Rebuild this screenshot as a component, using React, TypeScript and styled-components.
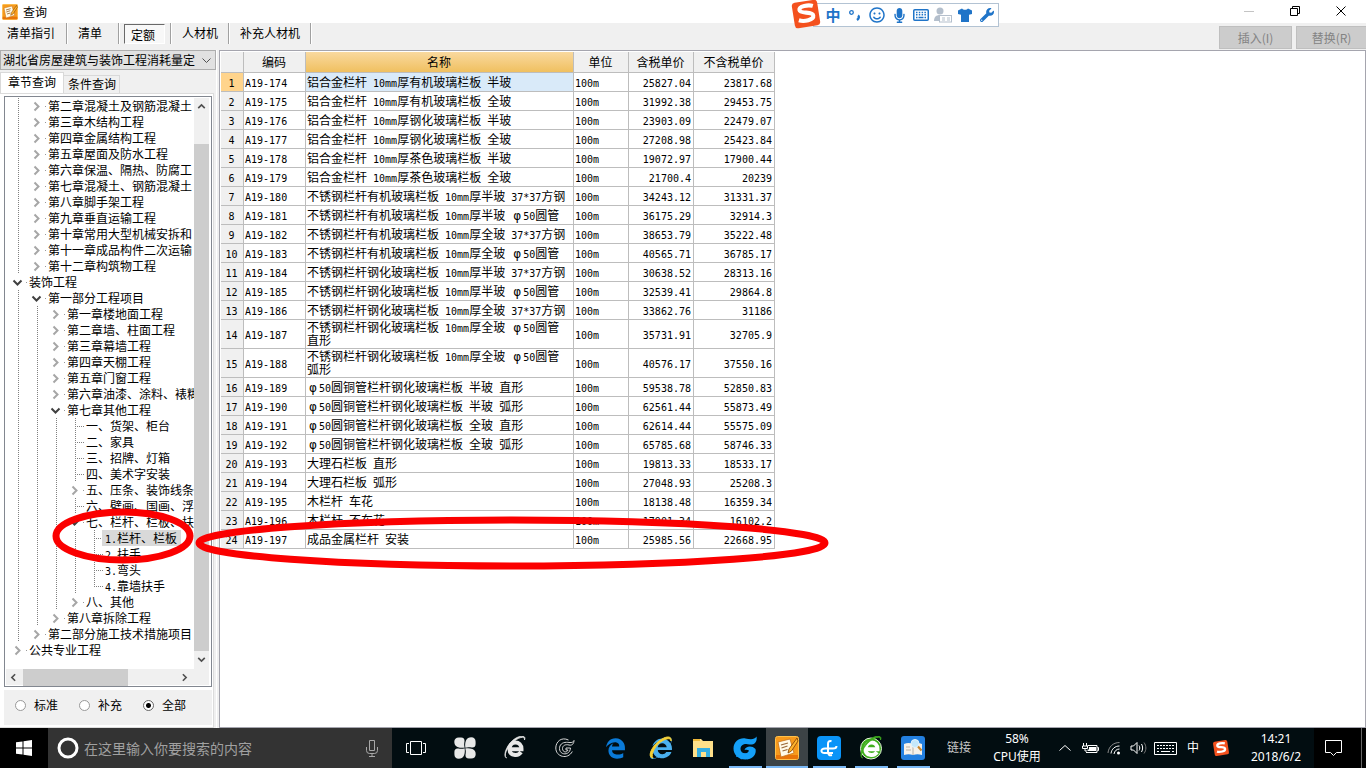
import React, { useState } from "react";
import styled, { createGlobalStyle, css } from "styled-components";
import {
  FaEdgeLegacy,
  FaInternetExplorer,
  FaMicrophone,
  FaRegSmile,
  FaWrench,
} from "react-icons/fa";

const uiFont = `"Noto Sans CJK SC", sans-serif`;
const monoFont = `"DejaVu Sans Mono", "Noto Sans CJK SC", monospace`;

const GlobalStyle = createGlobalStyle`
  *, *::before, *::after { box-sizing: border-box; }
  body { margin: 0; background: #f0f0f0; color: #000; font: 12px/16px ${uiFont}; }
  button, input, select { font: inherit; color: inherit; margin: 0; }
  svg { display: block; flex: none; }
`;

/* ---------- mixed half-width / full-width text ---------- */

const Half = styled.span`
  font-family: ${monoFont};
  font-size: 10px;
  line-height: 8px;
  white-space: pre-wrap;
`;

const Wide = styled.span`
  display: inline-block;
  width: 12px;
  line-height: 8px;
  text-align: center;
  font-family: "DejaVu Sans", sans-serif;
`;

function Mixed({ text }: { text: string }) {
  return (
    <>
      {text.split(/([\x20-\x7e]+|φ)/).map((part, i) => {
        if (part === "φ") return <Wide key={i}>φ</Wide>;
        return i % 2 ? <Half key={i}>{part}</Half> : part;
      })}
    </>
  );
}

/* ---------- window frame ---------- */

const Screen = styled.div`
  position: relative;
  display: flex;
  flex-direction: column;
  min-height: 100vh;
`;

const TitleBar = styled.header`
  display: flex;
  align-items: center;
  height: 23px;
  padding-left: 2px;
  gap: 5px;
  background: #fff;
`;

const WindowTitle = styled.h1`
  margin: 0;
  font-size: 12px;
  font-weight: 400;
`;

const WindowButtons = styled.div`
  display: flex;
  margin-left: auto;
  padding-right: 2px;
`;

const WindowButton = styled.button`
  display: grid;
  place-items: center;
  width: 46px;
  height: 22px;
  padding: 0;
  border: 0;
  background: none;
`;

const Toolbar = styled.nav`
  display: flex;
  align-items: flex-start;
  height: 27px;
`;

const ToolSlot = styled.div`
  display: flex;
  align-items: center;
  height: 21px;
  border-right: 1px solid #a0a0a0;
  box-shadow: 1px 0 #fff;
  &:nth-child(2) { padding-right: 6px; }
`;

const ToolButton = styled.button<{ $pressed?: boolean }>`
  height: 20px;
  padding: 0 10px 2px 11px;
  border: 0;
  background: none;
  line-height: 18px;
  ${ToolSlot}:first-child & { padding: 0 11px 2px 7px; }
  ${(p) =>
    p.$pressed &&
    css`
      margin: 1px 5px 0;
      padding: 1px 9px 0 6px;
      line-height: 16px;
      background: #f8f8f8;
      border: 1px solid #fff;
      border-top-color: #696969;
      border-left-color: #696969;
    `}
`;

const ToolActions = styled.div`
  display: flex;
  gap: 4px;
  margin-left: auto;
  padding-top: 3px;
`;

const ActionButton = styled.button`
  height: 23px;
  width: 73px;
  padding: 0;
  border: 1px solid #bfbfbf;
  background: #ccc;
  color: #838383;
  &:last-child {
    width: 70px;
    border-right: 0;
  }
`;

const Workspace = styled.main`
  display: flex;
  flex: 1;
  gap: 2px;
`;

/* ---------- left column ---------- */

const SidePanel = styled.aside`
  display: flex;
  flex-direction: column;
  width: 217px;
  flex: none;
  border-right: 1px solid #fff;
`;

const LibraryBox = styled.div`
  position: relative;
  svg {
    position: absolute;
    right: 5px;
    top: 8px;
    pointer-events: none;
  }
`;

const LibrarySelect = styled.select`
  appearance: none;
  display: block;
  width: 100%;
  height: 20px;
  padding: 0 20px 0 2px;
  border: 1px solid #adadad;
  border-radius: 0;
  background: #e1e1e1;
`;

const Tabs = styled.div`
  display: flex;
  align-items: flex-end;
  height: 23px;
  padding-top: 2px;
`;

const Tab = styled.button<{ $active?: boolean }>`
  height: 18px;
  padding: 0 3px 2px 4px;
  border: 1px solid #d9d9d9;
  border-bottom: 0;
  border-left: 0;
  background: #f0f0f0;
  line-height: 15px;
  ${(p) =>
    p.$active &&
    css`
      height: 21px;
      padding: 0 7px 3px 7px;
      border-left: 1px solid #d9d9d9;
      background: #fff;
    `}
`;

const TabPage = styled.section`
  display: flex;
  flex-direction: column;
  flex: 1;
  margin-right: 2px;
  padding: 2px 1px 2px 4px;
  border: 1px solid #dcdcdc;
  border-left: 0;
  background: #fff;
`;

const TreeBox = styled.div`
  display: grid;
  grid-template-columns: 1fr 15px;
  grid-template-rows: 1fr 16px;
  flex: 1;
  padding: 1px 2px 1px 1px;
  border: 1px solid #828790;
`;

const TreeList = styled.ul`
  min-width: 0;
  margin: 0;
  padding: 0 0 0 3px;
  overflow: hidden;
  list-style: none;
`;

const TreeRow = styled.li`
  display: flex;
  height: 16px;
  line-height: 16px;
  white-space: nowrap;
`;

const Guide = styled.span<{ $kind: "line" | "leaf" | "last" }>`
  width: 19px;
  height: 16px;
  flex: none;
  background-repeat: no-repeat;
  background-image: ${(p) =>
    p.$kind === "line"
      ? "repeating-linear-gradient(#808080 0 1px, transparent 1px 2px)"
      : "repeating-linear-gradient(#808080 0 1px, transparent 1px 2px), repeating-linear-gradient(90deg, #808080 0 1px, transparent 1px 2px)"};
  background-size: 1px ${(p) => (p.$kind === "last" ? "9px" : "16px")}, 9px 1px;
  background-position: 9px 0, 9px 8px;
`;

const Toggle = styled.span`
  display: flex;
  align-items: center;
  width: 19px;
  height: 16px;
  padding-left: 3px;
  flex: none;
  background: linear-gradient(#999, #999) 17px 8px / 1px 1px no-repeat;
`;

const NodeLabel = styled.span<{ $selected?: boolean }>`
  height: 16px;
  padding: 0 4px 0 1px;
  ${(p) =>
    p.$selected &&
    css`
      margin-left: -2px;
      padding-left: 3px;
      background: #d9d9d9;
    `}
`;

const ScrollV = styled.div`
  display: grid;
  grid-template-rows: 46px 1fr 18px;
  justify-items: center;
  background: #f0f0f0;
`;

const ScrollH = styled.div`
  display: grid;
  grid-column: 1 / 3;
  grid-template-columns: 17px 105px 1fr 32px;
  align-items: center;
  background: #f0f0f0;
`;

const Thumb = styled.span`
  align-self: stretch;
  justify-self: stretch;
  background: #cdcdcd;
`;

const ScrollButton = styled.button`
  display: grid;
  place-items: center;
  width: 15px;
  height: 17px;
  padding: 0;
  border: 0;
  background: none;
`;

const ScopeBar = styled.div`
  display: flex;
  align-items: center;
  height: 35px;
  margin-top: 3px;
  padding: 0 0 5px 11px;
  background: #f0f0f0;
`;

const ScopeOption = styled.label`
  display: flex;
  align-items: center;
  gap: 8px;
  width: 64px;
  white-space: nowrap;
`;

const Radio = styled.input`
  appearance: none;
  width: 11px;
  height: 11px;
  border: 1px solid #999;
  border-radius: 50%;
  background: #fff;
  &:checked {
    border-color: #666;
    background: radial-gradient(circle, #000 0 2px, #fff 3px);
  }
`;

/* ---------- price table ---------- */

const Sheet = styled.section`
  flex: 1;
  min-width: 0;
  padding: 1px;
  border: 1px solid #a5a5ae;
  background: #fff;
`;

const PriceTable = styled.table`
  width: 554px;
  border-collapse: separate;
  border-spacing: 0;
  table-layout: fixed;
  line-height: 13px;
  tr { height: 19px; }
  thead tr { height: 21px; }
`;

const HeadCell = styled.th<{ $active?: boolean }>`
  padding: 0 1px 2px 0;
  border-right: 1px solid #bdbdbd;
  border-bottom: 1px solid #bdbdbd;
  background: ${(p) => (p.$active ? "linear-gradient(#f9d99f, #f0c060)" : "#f0f0f0")};
  font-weight: 400;
  text-align: center;
`;

const RowHead = styled(HeadCell)`
  background: ${(p) => (p.$active ? "#ffd48c" : "#f0f0f0")};
`;

const Cell = styled.td<{ $number?: boolean; $active?: boolean }>`
  padding: 0 ${(p) => (p.$number ? "2px" : "1px")} 2px 1px;
  border-right: 1px solid #bdbdbd;
  border-bottom: 1px solid #bdbdbd;
  background: ${(p) => (p.$active ? "#d9eaf9" : "#fff")};
  text-align: ${(p) => (p.$number ? "right" : "left")};
`;

/* ---------- input method bar, pen marks ---------- */

const InputBar = styled.div`
  position: absolute;
  top: 3px;
  right: 367px;
  display: flex;
  align-items: center;
  height: 24px;
  padding: 0 0 0 8px;
  border: 1px solid #b3c3d3;
  background: #fff;
  color: #1f74c8;
`;

const InputLogo = styled.span`
  position: absolute;
  left: -24px;
  top: -6px;
`;

const InputTool = styled.button`
  display: grid;
  place-items: center;
  width: 22px;
  height: 22px;
  padding: 0;
  border: 0;
  background: none;
  font-size: 15px;
  font-weight: 700;
`;

const PenMarks = styled.svg`
  position: absolute;
  left: 0;
  top: 0;
  width: 840px;
  height: 600px;
  pointer-events: none;
`;

/* ---------- taskbar ---------- */

const Taskbar = styled.footer`
  display: flex;
  height: 40px;
  background: #020d11;
  color: #fff;
`;

const TaskButton = styled.button<{ $width: number; $mark?: boolean; $active?: boolean }>`
  display: grid;
  place-items: center;
  width: ${(p) => p.$width}px;
  flex: none;
  padding: 0;
  border: 0;
  background: ${(p) => (p.$active ? "#3c4346" : "none")};
  ${(p) =>
    p.$mark &&
    css`
      background-image: linear-gradient(#7ab8f5, #7ab8f5);
      background-size: ${p.$active ? "42px" : "33px"} 2px;
      background-repeat: no-repeat;
      background-position: center bottom;
    `}
`;

const StartButton = styled(TaskButton)`
  background: #000;
`;

const SearchBox = styled.label`
  display: flex;
  align-items: center;
  flex: 0 0 344px;
  padding: 0 14px 0 8px;
  gap: 4px;
  background: #333;
`;

const SearchInput = styled.input`
  flex: 1;
  min-width: 0;
  padding: 0;
  border: 0;
  outline: 0;
  background: none;
  font-size: 14px;
  &::placeholder { color: #a0a0a0; opacity: 1; }
`;

const Tray = styled.div`
  display: flex;
  align-items: center;
  margin-left: auto;
`;

const TrayText = styled.div<{ $width: number; $dim?: boolean }>`
  width: ${(p) => p.$width}px;
  color: ${(p) => (p.$dim ? "#c8c8c8" : "#fff")};
  font-family: "Noto Sans", ${uiFont};
  line-height: 18px;
  text-align: center;
  white-space: nowrap;
`;

const TrayIcon = styled.button<{ $width: number }>`
  display: grid;
  place-items: center;
  width: ${(p) => p.$width}px;
  height: 40px;
  padding: 0;
  border: 0;
  background: none;
`;

const NoticeArea = styled.div`
  display: flex;
  align-items: center;
  justify-content: center;
  width: 52px;
  height: 40px;
  padding-right: 14px;
  background: linear-gradient(#666, #666) 47px 0 / 1px 40px no-repeat #000;
`;

/* ---------- drawings ---------- */

function Chevron({ dir, color, size = 11 }: { dir: "right" | "down" | "up" | "left"; color: string; size?: number }) {
  const paths = {
    right: "M3.5 1.5 7.5 5.5 3.5 9.5",
    left: "M7.5 1.5 3.5 5.5 7.5 9.5",
    down: "M1.5 3.5 5.5 7.5 9.5 3.5",
    up: "M1.5 7.5 5.5 3.5 9.5 7.5",
  };
  return (
    <svg width={size} height={size} viewBox="0 0 11 11" fill="none" stroke={color} strokeWidth="2">
      <path d={paths[dir]} />
    </svg>
  );
}

function NoteLogo({ size }: { size: number }) {
  return (
    <svg width={size} height={size} viewBox="0 0 24 24">
      <rect x="0.5" y="0.5" width="23" height="23" rx="2" fill="#f79a1c" stroke="#ffc14a" />
      <path d="M1 19h22v3a1 1 0 0 1-1 1H2a1 1 0 0 1-1-1z" fill="#e87408" />
      <path d="M3 6 15 3l4 14-13 4z" fill="#fffbe8" stroke="#c8741a" strokeWidth="0.8" />
      <path d="m6 9 7-2M6.500 12l6-2M7.500 15l5-1.500" stroke="#9a6a3a" strokeWidth="1.300" />
      <path d="M22 2 14 13l-1 4 3.500-2L23 5z" fill="#ffb52e" stroke="#8a4a08" strokeWidth="0.900" />
    </svg>
  );
}

function SogouLogo({ size }: { size: number }) {
  return (
    <svg width={size} height={size} viewBox="0 0 30 30">
      <g transform="rotate(-9 15 15)">
        <rect x="3" y="3" width="24" height="24" rx="3" fill="#f4511e" />
        <path
          d="M22.500 8.500c-4-1.800-13-2-13 1.800 0 4.200 12 2.700 12 7.200 0 4.300-9.500 4.500-14 2.300"
          fill="none"
          stroke="#fff"
          strokeWidth="3.800"
        />
      </g>
    </svg>
  );
}

const PersonCard = () => (
  <svg width="18" height="16" viewBox="0 0 18 16" fill="#b4bfcc">
    <circle cx="6" cy="4" r="3.500" />
    <path d="M0 14c0-4 2-6 6-6 1 0 2 0 3 .5V14z" />
    <rect x="5.500" y="8.500" width="12" height="6.500" fill="#fff" stroke="#b4bfcc" />
    <path d="M8 10.500h3v1H8zM8 12.500h3v1H8zM13 10.500h3v1h-3zM13 12.500h3v1h-3z" />
  </svg>
);

const Shirt = () => (
  <svg width="14" height="14" viewBox="0 0 14 14" fill="#1f74c8">
    <path d="M0 2.500 4 .5c1 1.700 5 1.700 6 0l4 2v3.500l-3 .8V14H3V6.800L0 6z" />
  </svg>
);

const SoftKeyboard = () => (
  <svg width="16" height="12" viewBox="0 0 16 12" fill="none" stroke="#1f74c8">
    <rect x="0.750" y="0.750" width="14.500" height="10.500" rx="1" strokeWidth="1.500" />
    <path d="M3 3.500h10M3 5.800h10" strokeWidth="1.500" strokeDasharray="1.500 1.300" />
    <path d="M3 8.500h1.500M5.500 8.500h5M11.500 8.500H13" strokeWidth="1.500" />
  </svg>
);

const WindowsLogo = () => (
  <svg width="16" height="16" viewBox="0 0 16 16" fill="#fff">
    <path d="M0 2.300 6.500 1.400v6.100H0zM7.500 1.200 16 0v7.500H7.500zM0 8.500h6.500v6.100L0 13.700zM7.500 8.500H16V16l-8.500-1.200z" />
  </svg>
);

const TaskView = () => (
  <svg width="20" height="14" viewBox="0 0 20 14" fill="none" stroke="#fff">
    <path d="M4.500.5h11v13h-11zM3 2.500H.5v9H3M17 2.500h2.500v9H17" />
  </svg>
);

const Pinwheel = () => (
  <svg width="22" height="22" viewBox="0 0 22 22" fill="#e8e8e8">
    {[0, 90, 180, 270].map((a) => (
      <path
        key={a}
        transform={`rotate(${a} 11 11)`}
        d="M10.800 10.600C8.500 11 6 11 3.500 10 1 9 .3 7 .3 4.800.3 2 2 .4 4.800.4H7c2.600 0 3.800 1.500 3.500 3.800-.4 2.400-.6 4.400.3 6.400z"
      />
    ))}
  </svg>
);

function BrowserE({ ring, body }: { ring: string; body: string }) {
  return (
    <svg width="24" height="24" viewBox="0 0 24 24" fill="none">
      {body !== ring && <circle cx="12" cy="12.500" r="10.500" fill={ring} stroke="#e6f6dc" />}
      <path d="M6.500 13.200h12c.2-9-12-9-12 0 0 6.500 8.500 7.500 11.500 3" stroke={body} strokeWidth="4" />
      <path
        d="M3.500 22c-4-2 2-14 10-18.500C17.500 1 22 0 21.500 4c2-5-4-4.500-8.500-2C5 6.500-1 19 3.500 22z"
        fill={ring}
        stroke={ring}
        strokeWidth="0.800"
      />
    </svg>
  );
}

const SwirlLine = () => (
  <svg width="20" height="20" viewBox="0 0 20 20" fill="none" stroke="#d8d8d8">
    <path d="M19 2.500c-1.500 3-4 1.800-7.500 1.800-4.500 0-7 2.700-7 6.200 0 7 10.500 7.500 11-.5h-4.500v2h2c-1 3-5.500 2.500-5.500-1.500 0-3 3-4.500 6.500-3.500C17.500 8 19 5 19 2.500z" />
    <path d="M13.500 2C6-1.500.8 4 .8 10c0 9 12 12 16.500 3.500" />
  </svg>
);

const SwirlBlue = () => (
  <svg width="24" height="24" viewBox="0 0 24 24">
    <path d="M4 18 3 21l3.500-.5L8 23.500l3.500-1.500 3.500 1.500 1.500-3 3.500.5-1-4z" fill="#0a84e0" />
    <path
      d="M23.500.5c1 5.500-2 8.500-7 8-4.500-1.500-9 0-9 4.500 0 5 7 6 8.500 1.500-1.500-1-3-1-4.500-.5 1-4 7.500-5 11-1 1.500 6-4 10.500-10 10.500C5 23.500.5 18.500.5 12.500c0-7 6-11 12-10C17 3.300 21.500 4 23.500.5z"
      fill="#14a0f8"
    />
  </svg>
);

const FolderIcon = () => (
  <svg width="22" height="20" viewBox="0 0 22 20">
    <path d="M1 1h8l2 2h10v16H1z" fill="#ffe08a" />
    <path d="M1 1h7v2H1z" fill="#f0b93a" />
    <path d="M5 10h13v9h-4v-5h-5v5H5z" fill="#35aee2" />
  </svg>
);

const SyncIcon = () => (
  <svg width="24" height="24" viewBox="0 0 24 24">
    <rect width="24" height="24" rx="4" fill="#0a94f8" />
    <path
      d="M14.500 5.300c-2.500-.8-3.500.7-3.500 2.700v8c0 3 1.500 3.700 4 3M19.500 10c0 2-1.500 2.500-3.500 2.500H8c-5 0-4.500 5 0 4.500h8"
      fill="none"
      stroke="#fff"
      strokeWidth="2"
    />
  </svg>
);

const BookIcon = () => (
  <svg width="24" height="24" viewBox="0 0 24 24">
    <rect width="24" height="24" rx="3" fill="#2380e0" />
    <path d="M3 8c3-1.500 6-1.500 9 0 3-1.500 6-1.500 9 0v11c-3-1-6-1-9 0-3-1-6-1-9 0z" fill="#f6f2ea" />
    <path d="M12 8v11M5 11h4M5 14h5" stroke="#b9b2a8" />
    <circle cx="14" cy="7.500" r="4" fill="#c4e8fb" stroke="#e4f4fc" />
    <path d="m17 10.500 3.500 4" stroke="#c8862c" strokeWidth="2" />
  </svg>
);

const BatteryIcon = () => (
  <svg width="17" height="13" viewBox="0 0 17 13" fill="none" stroke="#fff">
    <path d="M5.500 3.500h9.500v7H4M15.500 5.500h1v3h-1M1.500 1v3M4.500 1v3M.5 4h5v2.500h-5zM3 6.500V9h2" />
    <path d="M7 5h7v4H5.500V7.500H7z" fill="#fff" stroke="none" />
  </svg>
);

const WifiIcon = () => (
  <svg width="14" height="14" viewBox="0 0 14 14" fill="none" stroke="#fff">
    <path d="M1 12C1.500 6 6 1.500 12.500 1.500" stroke="#8a8a8a" />
    <path d="M4 12.500c.5-4.500 4-7.500 8.500-7.500M7 13c.5-3 2.500-5 5.500-5" />
    <circle cx="11.500" cy="12" r="1.500" fill="#fff" stroke="none" />
  </svg>
);

const SoundIcon = () => (
  <svg width="17" height="14" viewBox="0 0 17 14" fill="none" stroke="#fff">
    <path d="M1 5h2.500L7 1.500v11L3.500 9H1zM9 4.500c1 1.500 1 3.500 0 5M11.500 3c1.500 2.500 1.500 5.500 0 8" />
    <path d="M14 1.500c2.500 3.500 2.500 7.500 0 11" stroke="#777" />
  </svg>
);

const KeyboardIcon = () => (
  <svg width="23" height="13" viewBox="0 0 23 13" fill="none" stroke="#fff">
    <path d="M.5.5h22v12H.5z" />
    <path d="M3 3.500h17M3 6.500h17" strokeDasharray="2 1" />
    <path d="M3 9.500h2M7 9.500h9M18 9.500h2" />
  </svg>
);

/* ---------- data ---------- */

type NodeKind = "open" | "closed" | "leaf" | "last";
const tree: [number, NodeKind, string][] = [
  [1, "closed", "第二章混凝土及钢筋混凝土"],
  [1, "closed", "第三章木结构工程"],
  [1, "closed", "第四章金属结构工程"],
  [1, "closed", "第五章屋面及防水工程"],
  [1, "closed", "第六章保温、隔热、防腐工"],
  [1, "closed", "第七章混凝土、钢筋混凝土"],
  [1, "closed", "第八章脚手架工程"],
  [1, "closed", "第九章垂直运输工程"],
  [1, "closed", "第十章常用大型机械安拆和"],
  [1, "closed", "第十一章成品构件二次运输"],
  [1, "closed", "第十二章构筑物工程"],
  [0, "open", "装饰工程"],
  [1, "open", "第一部分工程项目"],
  [2, "closed", "第一章楼地面工程"],
  [2, "closed", "第二章墙、柱面工程"],
  [2, "closed", "第三章幕墙工程"],
  [2, "closed", "第四章天棚工程"],
  [2, "closed", "第五章门窗工程"],
  [2, "closed", "第六章油漆、涂料、裱糊"],
  [2, "open", "第七章其他工程"],
  [3, "leaf", "一、货架、柜台"],
  [3, "leaf", "二、家具"],
  [3, "leaf", "三、招牌、灯箱"],
  [3, "leaf", "四、美术字安装"],
  [3, "closed", "五、压条、装饰线条"],
  [3, "leaf", "六、壁画、国画、浮"],
  [3, "open", "七、栏杆、栏板、扶"],
  [4, "leaf", "1.栏杆、栏板"],
  [4, "leaf", "2.扶手"],
  [4, "leaf", "3.弯头"],
  [4, "last", "4.靠墙扶手"],
  [3, "closed", "八、其他"],
  [2, "closed", "第八章拆除工程"],
  [1, "closed", "第二部分施工技术措施项目"],
  [0, "closed", "公共专业工程"],
];

const prices: [string, string, string][] = [
  ["铝合金栏杆 10mm厚有机玻璃栏板 半玻", "25827.04", "23817.68"],
  ["铝合金栏杆 10mm厚有机玻璃栏板 全玻", "31992.38", "29453.75"],
  ["铝合金栏杆 10mm厚钢化玻璃栏板 半玻", "23903.09", "22479.07"],
  ["铝合金栏杆 10mm厚钢化玻璃栏板 全玻", "27208.98", "25423.84"],
  ["铝合金栏杆 10mm厚茶色玻璃栏板 半玻", "19072.97", "17900.44"],
  ["铝合金栏杆 10mm厚茶色玻璃栏板 全玻", "21700.4", "20239"],
  ["不锈钢栏杆有机玻璃栏板 10mm厚半玻 37*37方钢", "34243.12", "31331.37"],
  ["不锈钢栏杆有机玻璃栏板 10mm厚半玻 φ50圆管", "36175.29", "32914.3"],
  ["不锈钢栏杆有机玻璃栏板 10mm厚全玻 37*37方钢", "38653.79", "35222.48"],
  ["不锈钢栏杆有机玻璃栏板 10mm厚全玻 φ50圆管", "40565.71", "36785.17"],
  ["不锈钢栏杆钢化玻璃栏板 10mm厚半玻 37*37方钢", "30638.52", "28313.16"],
  ["不锈钢栏杆钢化玻璃栏板 10mm厚半玻 φ50圆管", "32539.41", "29864.8"],
  ["不锈钢栏杆钢化玻璃栏板 10mm厚全玻 37*37方钢", "33862.76", "31186"],
  ["不锈钢栏杆钢化玻璃栏板 10mm厚全玻 φ50圆管 直形", "35731.91", "32705.9"],
  ["不锈钢栏杆钢化玻璃栏板 10mm厚全玻 φ50圆管 弧形", "40576.17", "37550.16"],
  ["φ50圆铜管栏杆钢化玻璃栏板 半玻 直形", "59538.78", "52850.83"],
  ["φ50圆铜管栏杆钢化玻璃栏板 半玻 弧形", "62561.44", "55873.49"],
  ["φ50圆铜管栏杆钢化玻璃栏板 全玻 直形", "62614.44", "55575.09"],
  ["φ50圆铜管栏杆钢化玻璃栏板 全玻 弧形", "65785.68", "58746.33"],
  ["大理石栏板 直形", "19813.33", "18533.17"],
  ["大理石栏板 弧形", "27048.93", "25208.3"],
  ["木栏杆 车花", "18138.48", "16359.34"],
  ["木栏杆 不车花", "17901.34", "16102.2"],
  ["成品金属栏杆 安装", "25985.56", "22668.95"],
];

const tools = ["清单指引", "清单", "定额", "人材机", "补充人材机"];
const columnWidths = [23, 62, 268, 55, 65, 81];

export default function App() {
  const [tool, setTool] = useState("定额");
  const [scope, setScope] = useState("全部");

  return (
    <Screen>
      <GlobalStyle />
      <TitleBar>
        <NoteLogo size={16} />
        <WindowTitle>查询</WindowTitle>
        <WindowButtons>
          <WindowButton aria-label="最小化">
            <svg width="10" height="10" stroke="#c4c4c4"><path d="M0 4.500h10" /></svg>
          </WindowButton>
          <WindowButton aria-label="还原">
            <svg width="11" height="11" fill="none" stroke="#000"><path d="M.5 2.500h7v7h-7zM2.500 2.500v-2h7v7h-2" /></svg>
          </WindowButton>
          <WindowButton aria-label="关闭">
            <svg width="11" height="11" stroke="#000"><path d="m.5.5 9 9M9.500.5l-9 9" /></svg>
          </WindowButton>
        </WindowButtons>
      </TitleBar>

      <Toolbar>
        {tools.map((name) => (
          <ToolSlot key={name}>
            <ToolButton $pressed={tool === name} onClick={() => setTool(name)}>
              {name}
            </ToolButton>
          </ToolSlot>
        ))}
        <ToolActions>
          <ActionButton disabled>插入(I)</ActionButton>
          <ActionButton disabled>替换(R)</ActionButton>
        </ToolActions>
      </Toolbar>

      <Workspace>
        <SidePanel>
          <LibraryBox>
            <LibrarySelect aria-label="定额库">
              <option>湖北省房屋建筑与装饰工程消耗量定</option>
            </LibrarySelect>
            <svg width="9" height="6" fill="none" stroke="#505050"><path d="m.5.5 4 4 4-4" /></svg>
          </LibraryBox>
          <Tabs role="tablist">
            <Tab role="tab" aria-selected $active>章节查询</Tab>
            <Tab role="tab" aria-selected={false}>条件查询</Tab>
          </Tabs>
          <TabPage>
            <TreeBox>
              <TreeList>
                {tree.map(([level, kind, label]) => (
                  <TreeRow key={label + level}>
                    {Array.from({ length: level }, (_, i) => (
                      <Guide key={i} $kind="line" />
                    ))}
                    {kind === "open" || kind === "closed" ? (
                      <Toggle>
                        <Chevron
                          dir={kind === "open" ? "down" : "right"}
                          color={kind === "open" ? "#404040" : "#a6a6a6"}
                        />
                      </Toggle>
                    ) : (
                      <Guide $kind={kind} />
                    )}
                    <NodeLabel $selected={label === "1.栏杆、栏板"}>
                      <Mixed text={label} />
                    </NodeLabel>
                  </TreeRow>
                ))}
              </TreeList>
              <ScrollV>
                <ScrollButton aria-label="向上"><Chevron dir="up" color="#505050" size={9} /></ScrollButton>
                <Thumb />
                <ScrollButton aria-label="向下"><Chevron dir="down" color="#505050" size={9} /></ScrollButton>
              </ScrollV>
              <ScrollH>
                <ScrollButton aria-label="向左"><Chevron dir="left" color="#505050" size={9} /></ScrollButton>
                <Thumb />
                <span />
                <ScrollButton aria-label="向右"><Chevron dir="right" color="#505050" size={9} /></ScrollButton>
              </ScrollH>
            </TreeBox>
            <ScopeBar role="radiogroup" aria-label="范围">
              {["标准", "补充", "全部"].map((name) => (
                <ScopeOption key={name}>
                  <Radio type="radio" name="scope" checked={scope === name} onChange={() => setScope(name)} />
                  {name}
                </ScopeOption>
              ))}
            </ScopeBar>
          </TabPage>
        </SidePanel>

        <Sheet>
          <PriceTable>
            <colgroup>
              {columnWidths.map((w, i) => (
                <col key={i} width={w} />
              ))}
            </colgroup>
            <thead>
              <tr>
                <HeadCell />
                <HeadCell>编码</HeadCell>
                <HeadCell $active>名称</HeadCell>
                <HeadCell>单位</HeadCell>
                <HeadCell>含税单价</HeadCell>
                <HeadCell>不含税单价</HeadCell>
              </tr>
            </thead>
            <tbody>
              {prices.map(([name, taxed, untaxed], i) => (
                <tr key={name}>
                  <RowHead $active={i === 0}><Half>{i + 1}</Half></RowHead>
                  <Cell><Half>A19-{174 + i}</Half></Cell>
                  <Cell $active={i === 0}><Mixed text={name} /></Cell>
                  <Cell><Half>100m</Half></Cell>
                  <Cell $number><Half>{taxed}</Half></Cell>
                  <Cell $number><Half>{untaxed}</Half></Cell>
                </tr>
              ))}
            </tbody>
          </PriceTable>
        </Sheet>
      </Workspace>

      <Taskbar>
        <StartButton $width={48} aria-label="开始"><WindowsLogo /></StartButton>
        <SearchBox>
          <svg width="24" height="24" fill="none" stroke="#fff" strokeWidth="3"><circle cx="12" cy="12" r="9" /></svg>
          <SearchInput placeholder="在这里输入你要搜索的内容" aria-label="搜索" />
          <svg width="12" height="18" fill="none" stroke="#a8a8a8">
            <path d="M3.500 1.500h5v10h-5zM.5 8v3.500q0 3 3 3h5q3 0 3-3V8M6 14.500v3M3 17.500h6" />
          </svg>
        </SearchBox>
        <TaskButton $width={48} aria-label="任务视图"><TaskView /></TaskButton>
        <TaskButton $width={50} aria-label="启动器"><Pinwheel /></TaskButton>
        <TaskButton $width={50} aria-label="浏览器"><BrowserE ring="#e8e8e8" body="#e8e8e8" /></TaskButton>
        <TaskButton $width={50} aria-label="广联达"><SwirlLine /></TaskButton>
        <TaskButton $width={50} aria-label="Edge"><FaEdgeLegacy size={21} color="#0a7ad8" /></TaskButton>
        <TaskButton $width={42} aria-label="Internet Explorer">
          <svg width="24" height="24" viewBox="0 0 24 24">
            <FaInternetExplorer x="1" y="1" size={22} color="#4ab0ee" />
            <path d="M4 22C-3 21 4 8 13 3c5-3 10-3 9 2 0-3-4-3-9 0C7 8 1 19 4 22z" fill="#f7cf32" stroke="#f7cf32" />
          </svg>
        </TaskButton>
        <TaskButton $width={42} aria-label="文件资源管理器"><FolderIcon /></TaskButton>
        <TaskButton $width={42} $mark aria-label="计价软件"><SwirlBlue /></TaskButton>
        <TaskButton $width={42} $mark $active aria-label="查询"><NoteLogo size={24} /></TaskButton>
        <TaskButton $width={42} $mark aria-label="同步"><SyncIcon /></TaskButton>
        <TaskButton $width={42} $mark aria-label="安全浏览器"><BrowserE ring="#3fae1e" body="#fff" /></TaskButton>
        <TaskButton $width={42} $mark aria-label="阅读"><BookIcon /></TaskButton>
        <Tray>
          <TrayText $width={50} $dim>链接</TrayText>
          <TrayText $width={66}>58%<br />CPU使用</TrayText>
          <TrayIcon $width={30} aria-label="显示隐藏的图标">
            <svg width="12" height="8" fill="none" stroke="#fff"><path d="m.5 6.500 5.500-5 5.500 5" /></svg>
          </TrayIcon>
          <TrayIcon $width={20} aria-label="电源"><BatteryIcon /></TrayIcon>
          <TrayIcon $width={28} aria-label="网络"><WifiIcon /></TrayIcon>
          <TrayIcon $width={20} aria-label="音量"><SoundIcon /></TrayIcon>
          <TrayIcon $width={34} aria-label="触摸键盘"><KeyboardIcon /></TrayIcon>
          <TrayText $width={22}>中</TrayText>
          <TrayIcon $width={34} aria-label="输入法"><SogouLogo size={18} /></TrayIcon>
          <TrayText $width={76}>14:21<br />2018/6/2</TrayText>
          <NoticeArea>
            <svg width="17" height="17" fill="none" stroke="#fff"><path d="M.5.500h16v12h-5l-3 3-3-3h-5z" /></svg>
          </NoticeArea>
        </Tray>
      </Taskbar>

      <InputBar>
        <InputLogo><SogouLogo size={32} /></InputLogo>
        <InputTool>中</InputTool>
        <InputTool aria-label="标点">
          <svg width="12" height="12" fill="none" stroke="#1f74c8"><circle cx="2.500" cy="3.500" r="1.800" strokeWidth="1.300" /><path d="M9 6.500c1.500 1 1 3-1 4.500" strokeWidth="2.400" /></svg>
        </InputTool>
        <InputTool aria-label="表情"><FaRegSmile size={16} /></InputTool>
        <InputTool aria-label="语音"><FaMicrophone size={15} /></InputTool>
        <InputTool aria-label="软键盘"><SoftKeyboard /></InputTool>
        <InputTool aria-label="账户"><PersonCard /></InputTool>
        <InputTool aria-label="皮肤"><Shirt /></InputTool>
        <InputTool aria-label="工具箱"><FaWrench size={14} /></InputTool>
      </InputBar>

      <PenMarks fill="none" stroke="#fb0000" strokeWidth="7" aria-hidden="true">
        <ellipse cx="123" cy="536" rx="67" ry="24" />
        <ellipse cx="512" cy="543" rx="313" ry="23" />
      </PenMarks>
    </Screen>
  );
}
